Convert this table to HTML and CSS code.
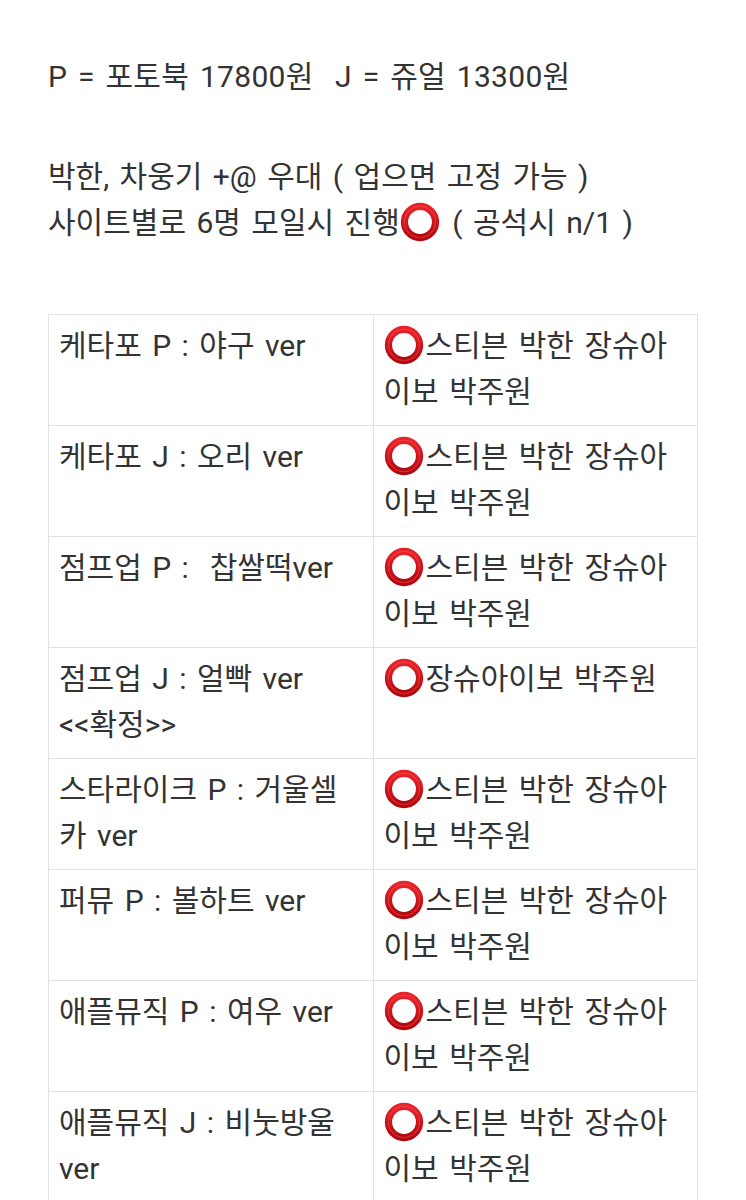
FILE: index.html
```html
<!DOCTYPE html>
<html lang="ko">
<head>
<meta charset="utf-8">
<link rel="stylesheet" href="styles.css">
</head>
<body>
<svg width="0" height="0" class="defs" aria-hidden="true">
  <defs>
    <linearGradient id="rg" x1="0" y1="0" x2="0" y2="1">
      <stop offset="0" stop-color="#e8232a"/>
      <stop offset="1" stop-color="#b3060d"/>
    </linearGradient>
    <symbol id="ring" viewBox="0 0 36 36">
      <circle cx="18" cy="18" r="14" fill="none" stroke="url(#rg)" stroke-width="6.5"/>
      <circle cx="18" cy="18" r="14" fill="none" stroke="#ff6b6b" stroke-opacity="0.35" stroke-width="1.2"/>
    </symbol>
  </defs>
</svg>
<div class="page">
  <p class="intro">P = 포토북 17800원&nbsp; J = 쥬얼 13300원</p>
  <p class="note">박한, 차웅기 +@ 우대 ( 업으면 고정 가능 )<br>사이트별로 6명 모일시 진행<svg class="ring"><use href="#ring"/></svg> ( 공석시 n/1 )</p>
  <table class="list">
    <tr><td>케타포 P : 야구 ver</td><td><svg class="ring"><use href="#ring"/></svg>스티븐 박한 장슈아<br>이보 박주원</td></tr>
    <tr><td>케타포 J : 오리 ver</td><td><svg class="ring"><use href="#ring"/></svg>스티븐 박한 장슈아<br>이보 박주원</td></tr>
    <tr><td>점프업 P :&nbsp; 찹쌀떡ver</td><td><svg class="ring"><use href="#ring"/></svg>스티븐 박한 장슈아<br>이보 박주원</td></tr>
    <tr><td>점프업 J : 얼빡 ver<br>&lt;&lt;확정&gt;&gt;</td><td><svg class="ring"><use href="#ring"/></svg>장슈아이보 박주원</td></tr>
    <tr><td>스타라이크 P : 거울셀<br>카 ver</td><td><svg class="ring"><use href="#ring"/></svg>스티븐 박한 장슈아<br>이보 박주원</td></tr>
    <tr><td>퍼뮤 P : 볼하트 ver</td><td><svg class="ring"><use href="#ring"/></svg>스티븐 박한 장슈아<br>이보 박주원</td></tr>
    <tr><td>애플뮤직 P : 여우 ver</td><td><svg class="ring"><use href="#ring"/></svg>스티븐 박한 장슈아<br>이보 박주원</td></tr>
    <tr><td>애플뮤직 J : 비눗방울<br>ver</td><td><svg class="ring"><use href="#ring"/></svg>스티븐 박한 장슈아<br>이보 박주원</td></tr>
  </table>
</div>
</body>
</html>
```
FILE: styles.css
```css
html, body {
  margin: 0;
  padding: 0;
  background: #ffffff;
}
.defs {
  position: absolute;
  width: 0;
  height: 0;
}
.page {
  padding: 54px 49px 0 48px;
  font-family: Roboto, "Noto Sans CJK KR", sans-serif;
  font-size: 30px;
  line-height: 46px;
  word-spacing: 3px;
  color: #333333;
}
.intro {
  margin: 0 0 54px;
  letter-spacing: 0.3px;
}
.note {
  margin: 0 0 68px;
}
.ring {
  width: 40px;
  height: 40px;
  vertical-align: -9px;
  margin-right: 2px;
}
.list {
  width: 650px;
  border-collapse: collapse;
  table-layout: fixed;
}
.list td {
  width: 50%;
  border: 1px solid #e2e2e2;
  padding: 8px 10px 10px;
  vertical-align: top;
}
```
